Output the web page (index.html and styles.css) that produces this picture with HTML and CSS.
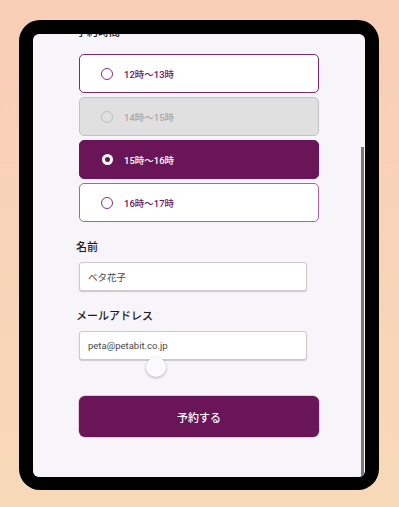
FILE: index.html
```html
<!doctype html>
<html>
    <head>
        <meta charset="utf-8" />
        <link rel="stylesheet" href="styles.css">
    </head>
    <body>
        <div class="device">
            <div class="screen">
                <form class="page">
                    <p class="field-label first">予約時間</p>

                    <div class="slots">
                        <div class="slot">
                            <span class="radio"></span>12時〜13時
                        </div>
                        <div class="slot disabled">
                            <span class="radio"></span>14時〜15時
                        </div>
                        <div class="slot checked">
                            <span class="radio"></span>15時〜16時
                        </div>
                        <div class="slot soft">
                            <span class="radio"></span>16時〜17時
                        </div>
                    </div>

                    <p class="field-label">名前</p>
                    <div class="text-input">ベタ花子</div>

                    <p class="field-label">メールアドレス</p>
                    <div class="text-input">peta@petabit.co.jp</div>

                    <div class="submit">予約する</div>
                </form>

                <!-- floating thumb + scroll indicator -->
                <span class="thumb"></span>
                <span class="scrollbar"></span>
            </div>
        </div>
    </body>
</html>
```

FILE: styles.css
```css
html {
    margin: 0;
    width: 100%;
    height: 100%;
}
body {
    margin: 0;
    padding: 20px 0 0 19px;
    min-height: 100%;
    box-sizing: border-box;
    background: linear-gradient(#f9ceb6, #f7d9b8);
    font-family: Roboto, "Noto Sans CJK JP", sans-serif;
}

.device {
    width: 360px;
    height: 470px;
    box-sizing: border-box;
    border: 14px solid #000;
    border-bottom-width: 13px;
    border-radius: 21px;
    background: #000;
}
.screen {
    position: relative;
    height: 100%;
    overflow: hidden;
    border-radius: 6px;
    background: #f7f5f9;
}

.page {
    margin: 0;
    padding: 0 0 0 43px;
}

.field-label {
    margin: 19px 0 7px;
    height: 14px;
    line-height: 14px;
    font-size: 11px;
    font-weight: 500;
    color: #1f1b20;
}
.field-label.first {
    margin-top: -8px;
    margin-bottom: 14px;
}

.slots {
    display: flex;
    flex-direction: column;
    gap: 4px;
    margin-left: 3px;
    width: 240px;
}
.slot {
    display: flex;
    align-items: center;
    gap: 11px;
    height: 39px;
    box-sizing: border-box;
    padding-left: 21px;
    border: 1px solid #7b2a6d;
    border-radius: 5px;
    background: #fff;
    font-size: 9.5px;
    font-weight: 500;
    color: #6d1a5c;
}
.slot .radio {
    width: 12px;
    height: 12px;
    box-sizing: border-box;
    border: 1.5px solid #85337a;
    border-radius: 50%;
}
.slot.disabled {
    border-color: #c2c2c2;
    background: #e0e0e0;
    color: #a9a9a9;
}
.slot.disabled .radio {
    border-color: #bdbdbd;
}
.slot.checked {
    border-color: #6a1558;
    background: #6a1558;
    color: #fff;
}
.slot.checked .radio {
    width: 11px;
    height: 11px;
    margin: 0 0.5px;
    border: 3px solid #fff;
    background: #6a1558;
}
.slot.soft {
    border-color: #a8669a;
}

.text-input {
    display: flex;
    align-items: center;
    margin-left: 3px;
    width: 228px;
    height: 29px;
    box-sizing: border-box;
    padding-left: 8px;
    border: 1px solid #c9c9c9;
    border-radius: 3px;
    background: #fff;
    box-shadow: 0 1px 1px rgba(0, 0, 0, 0.18);
    font-size: 9.5px;
    color: #474747;
}

.submit {
    display: flex;
    align-items: center;
    justify-content: center;
    margin: 36px 0 0 3px;
    width: 240px;
    height: 41px;
    border-radius: 6px;
    background: #6a1558;
    box-shadow: 0 0 0 0.5px #c9a6c0;
    font-size: 11px;
    font-weight: 500;
    color: #fff;
}

.thumb {
    position: absolute;
    left: 113px;
    top: 323px;
    width: 20px;
    height: 20px;
    border-radius: 50%;
    background: #fbfafc;
    box-shadow: 0 1px 3px rgba(0, 0, 0, 0.3);
}
.scrollbar {
    position: absolute;
    right: 1px;
    top: 113px;
    bottom: 0;
    width: 3px;
    background: #797979;
}
```
